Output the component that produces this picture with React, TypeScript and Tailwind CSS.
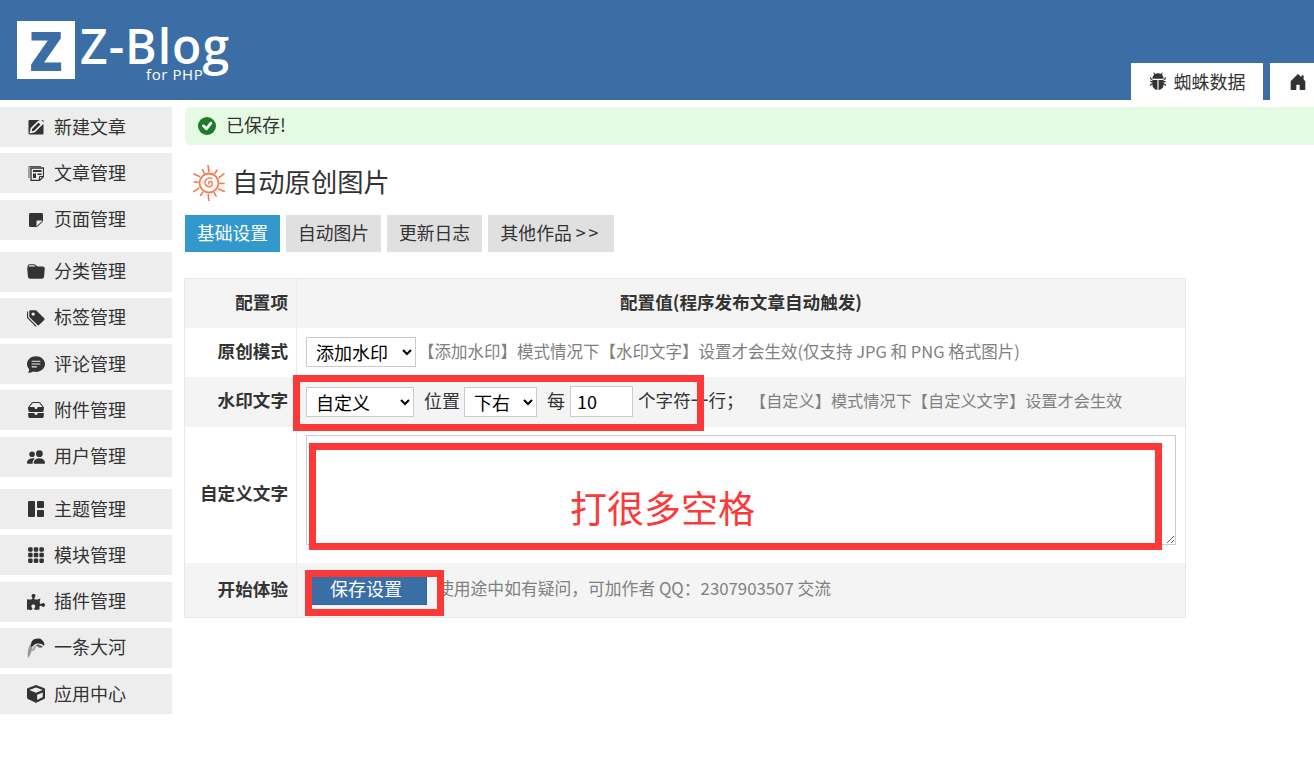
import type { ReactNode } from 'react'
import {
  BsBugFill,
  BsChatTextFill,
  BsCheck,
  BsFolderFill,
  BsGrid1X2Fill,
  BsGrid3X3GapFill,
  BsHouseDoorFill,
  BsInboxesFill,
  BsPeopleFill,
  BsStickyFill,
  BsTagsFill,
} from 'react-icons/bs'
import { FaCube, FaPuzzlePiece } from 'react-icons/fa'

const FONT = "font-['Noto_Sans_CJK_SC','Noto_Sans',sans-serif]"

function PencilBox() {
  return (
    <svg viewBox="0 0 16 16" className="h-4 w-4">
      <rect x="0.5" y="1" width="15" height="14.5" rx="1" fill="#333" />
      <path d="M2.5 13.5 3.5 9.5 10.5 2.5 13.5 5.500 6.500 12.500Z" fill="none" stroke="#fff" strokeWidth="1.5" />
      <path d="M11.500 1 15.500 5" stroke="#ededed" strokeWidth="2.5" />
    </svg>
  )
}

function ArticleIcon() {
  return (
    <svg viewBox="0 0 16 16" className="h-4 w-4" fill="none">
      <path d="M1 13V1.500h12" stroke="#555" strokeWidth="1" />
      <path d="M3 3h12.500v8.500L11.500 15.500H3Z" stroke="#333" strokeWidth="1.300" />
      <rect x="5" y="5" width="8.500" height="2" fill="#333" />
      <rect x="5" y="8.500" width="3" height="4.500" fill="#333" />
      <rect x="9.500" y="8.500" width="4" height="1.500" fill="#333" />
      <path d="M11.500 15.500V11.500h4" stroke="#333" strokeWidth="1" />
    </svg>
  )
}

function RiverIcon() {
  return (
    <svg viewBox="0 0 18 22" className="h-[22px] w-[18px]">
      <path d="M1 21C0 14 2 7 6 4c-1 4-1 7-1 9-1 3-2 6-4 8Z" fill="#999" />
      <path d="M5 14c0-3 2-6 6-6-2 1-3 3-3 5-1 1-2 1-3 1Z" fill="#aaa" />
      <path d="M5 4c3-3 8-3 10-1 2 2 3 4 2 6-3-3-7-3-10-1-1 1-2 2-3 2 0-2 0-4 1-6Z" fill="#2e2e2e" />
      <path d="M9 8c3-1 5 0 7 2-2 1-4 1-5 0Z" fill="#666" />
    </svg>
  )
}

function SunIcon() {
  const rays = [0, 32, 62, 92, 122, 152, 184, 214, 244, 274, 304, 334]
  return (
    <svg viewBox="0 0 36 36" className="h-9 w-9" fill="none" stroke="#f6794d" strokeLinecap="round">
      {rays.map((r, i) => (
        <path
          key={r}
          d={i % 2 === 0 ? 'M18 6.500 17 0.500' : 'M18 7 18 3'}
          transform={`rotate(${r} 18 18)`}
          strokeWidth="1.600"
        />
      ))}
      <circle cx="18" cy="18" r="9.500" strokeWidth="1.800" />
      <path d="M18 19c-1-1 0-3 2-2.500s2 4-.5 5-6-1-5.500-4.500 4-5 7-3.500" strokeWidth="1.400" />
    </svg>
  )
}

type MenuItem = { label: string; icon: ReactNode }

const big = 'h-[18px] w-[18px]'
const ic = 'h-4 w-4'

const menuGroups: MenuItem[][] = [
  [
    { label: '新建文章', icon: <PencilBox /> },
    { label: '文章管理', icon: <ArticleIcon /> },
    { label: '页面管理', icon: <BsStickyFill className={ic} /> },
  ],
  [
    { label: '分类管理', icon: <BsFolderFill className={big} /> },
    { label: '标签管理', icon: <BsTagsFill className={big} /> },
    { label: '评论管理', icon: <BsChatTextFill className={big} /> },
    { label: '附件管理', icon: <BsInboxesFill className={ic} /> },
    { label: '用户管理', icon: <BsPeopleFill className={big} /> },
  ],
  [
    { label: '主题管理', icon: <BsGrid1X2Fill className={ic} /> },
    { label: '模块管理', icon: <BsGrid3X3GapFill className={big} /> },
    { label: '插件管理', icon: <FaPuzzlePiece className={big} /> },
    { label: '一条大河', icon: <RiverIcon /> },
    { label: '应用中心', icon: <FaCube className={big} /> },
  ],
]

const selectCls = 'h-[30px] border border-[#ccc] bg-white pb-[3px] pl-[5px] text-[18px] text-black outline-none'
const labelCls = 'border-r border-[#ebebeb] pb-[2px] pr-[8px] text-right text-[17.6px] font-bold'

export default function App() {
  return (
    <div className={`relative h-[783px] w-[1314px] overflow-hidden bg-white text-[#333] ${FONT}`}>
      {/* Header */}
      <header className="flex h-[100px] items-end justify-between overflow-hidden bg-[#3a6ea5]">
        <div className="relative mb-[21px] ml-[17px] flex self-end">
          <div className="flex h-[58px] w-[58px] items-center justify-center bg-white font-['Open_Sans'] text-[54px] font-extrabold leading-none text-[#3a6ea5]">
            Z
          </div>
          <div className="ml-[5px] mt-[3px] h-[44px] font-['Open_Sans'] text-[48px] font-semibold leading-[44px] tracking-[1px] text-white">
            Z-Blog
          </div>
          <div className="absolute left-[129px] top-[47px] font-['Open_Sans'] text-[15px] leading-[12px] tracking-[0.6px] text-white">
            for PHP
          </div>
        </div>
        <nav className="flex w-[183px] shrink-0 gap-[7px]">
          <div className="flex h-[37px] w-[132px] shrink-0 items-center justify-center gap-[7px] bg-white pb-[1px] text-[18px]">
            <BsBugFill className="h-[18px] w-[18px]" />
            蜘蛛数据
          </div>
          <div className="flex h-[37px] w-[132px] shrink-0 items-center gap-[7px] bg-white pl-[19px] text-[18px]">
            <BsHouseDoorFill className={big + ' shrink-0'} />
            <span className="whitespace-nowrap">网站首页</span>
          </div>
        </nav>
      </header>

      <div className="flex pt-[7px]">
        {/* Sidebar */}
        <aside className="flex w-[172px] shrink-0 flex-col">
          {menuGroups.map((group, i) => (
            <div
              key={i}
              className={`flex flex-col gap-[6.25px] ${i === 1 ? 'mt-[12px]' : ''} ${i === 2 ? 'mt-[12.5px]' : ''}`}
            >
              {group.map(item => (
                <div key={item.label} className="flex h-10 items-center bg-[#ededed] text-[18px]">
                  <span className="ml-[18px] flex w-[36px] justify-center">{item.icon}</span>
                  <span className="pb-[2px]">{item.label}</span>
                </div>
              ))}
            </div>
          ))}
        </aside>

        {/* Main */}
        <main className="ml-[13px] min-w-0 flex-1">
          <div className="flex h-[38px] items-center gap-[10px] rounded-l-[5px] bg-[#e6fbe3] pl-[13px] text-[18px]">
            <span className="flex h-[18px] w-[18px] items-center justify-center rounded-full bg-[#1f7a2c] text-white">
              <BsCheck className="h-[18px] w-[18px]" strokeWidth={1} />
            </span>
            <span className="pb-[3px]">已保存!</span>
          </div>

          <div className="mt-[20px] flex h-[36px] items-center gap-[5px] pl-[6px] text-[26.3px] leading-none">
            <SunIcon />
            <span className="pb-[3px]">自动原创图片</span>
          </div>

          <div className="mt-[14px] flex gap-[6px] text-[17.8px]">
            <div className="flex h-[37px] w-[95px] items-center justify-center bg-[#3399cc] pb-[2px] text-white">基础设置</div>
            <div className="flex h-[37px] w-[95px] items-center justify-center bg-[#e0e0e0] pb-[2px]">自动图片</div>
            <div className="flex h-[37px] w-[95px] items-center justify-center bg-[#e0e0e0] pb-[2px]">更新日志</div>
            <div className="flex h-[37px] w-[126px] items-center justify-center bg-[#e0e0e0] pb-[2px]">
              其他作品&nbsp;<span className="tracking-[3px]">&gt;&gt;</span>
            </div>
          </div>

          <table className="-ml-px mt-[26px] w-[1002px] table-fixed border-collapse border border-[#e8e8e8] text-[16.5px]">
            <tbody>
              <tr className="h-[49px] bg-[#f4f4f4] text-[17.6px] font-bold">
                <td className="w-[112px] border-r border-[#ebebeb] pb-[2px] pr-[8px] text-right">配置项</td>
                <td className="pb-[2px] text-center">配置值(程序发布文章自动触发)</td>
              </tr>
              <tr className="h-[49px]">
                <td className={labelCls}>原创模式</td>
                <td className="pl-[9px] text-[#808080]">
                  <div className="flex items-center gap-[2px]">
                    <select className={`${selectCls} w-[110px]`} defaultValue="a">
                      <option value="a">添加水印</option>
                    </select>
                    <span className="pb-[2px]">【添加水印】模式情况下【水印文字】设置才会生效(仅支持 JPG 和 PNG 格式图片)</span>
                  </div>
                </td>
              </tr>
              <tr className="h-[50px] bg-[#f4f4f4]">
                <td className={labelCls}>水印文字</td>
                <td className="pl-[9px] text-[16.2px] text-[#808080]">
                  <div className="flex items-center">
                    <select className={`${selectCls} w-[108px]`} defaultValue="a">
                      <option value="a">自定义</option>
                    </select>
                    <span className="ml-[10px] mr-[4px] pb-[2px] text-[18px] text-[#333]">位置</span>
                    <select className={`${selectCls} w-[73px]`} defaultValue="a">
                      <option value="a">下右</option>
                    </select>
                    <span className="ml-[10px] mr-[5px] pb-[2px] text-[18px] text-[#333]">每</span>
                    <input
                      defaultValue="10"
                      className="h-[31px] w-[63px] border border-[#ccc] bg-white pb-[2px] pl-[6px] text-[18px] text-black outline-none"
                    />
                    <span className="ml-[5px] w-[112px] whitespace-nowrap pb-[2px] text-[17.6px] text-[#333]">个字符一行；</span>
                    <span className="pb-[2px]">【自定义】模式情况下【自定义文字】设置才会生效</span>
                  </div>
                </td>
              </tr>
              <tr className="h-[136px]">
                <td className={labelCls}>自定义文字</td>
                <td className="pl-[9px] pr-[9px] pt-[8px] align-top">
                  <textarea className="block h-[110px] w-full border border-[#ccc] bg-white outline-none" />
                </td>
              </tr>
              <tr className="h-[55px] bg-[#f4f4f4]">
                <td className={labelCls}>开始体验</td>
                <td className="pl-[9px] text-[16.8px] text-[#808080]">
                  <div className="flex items-center">
                    <button className="h-[31px] w-[121px] border-b border-r border-[#1d6a9f] bg-[#3a6ea5] pb-[3px] text-[18px] leading-none text-white">
                      保存设置
                    </button>
                    <span className="ml-[10px] pb-[2px]">使用途中如有疑问，可加作者 QQ：2307903507 交流</span>
                  </div>
                </td>
              </tr>
            </tbody>
          </table>
        </main>
      </div>

      {/* Red annotations drawn over the screenshot */}
      <div className="absolute left-[293px] top-[375px] h-[56px] w-[411px] border-[7px] border-[#fd3838]" />
      <div className="absolute left-[309px] top-[443px] h-[107px] w-[853px] border-[7px] border-[#fd3838]" />
      <div className="absolute left-[305px] top-[570px] h-[46px] w-[139px] border-[7px] border-[#fd3838]" />
      <div className="absolute left-[570px] top-[481px] text-[37px] leading-[52px] text-[#fd3838]">打很多空格</div>
    </div>
  )
}
